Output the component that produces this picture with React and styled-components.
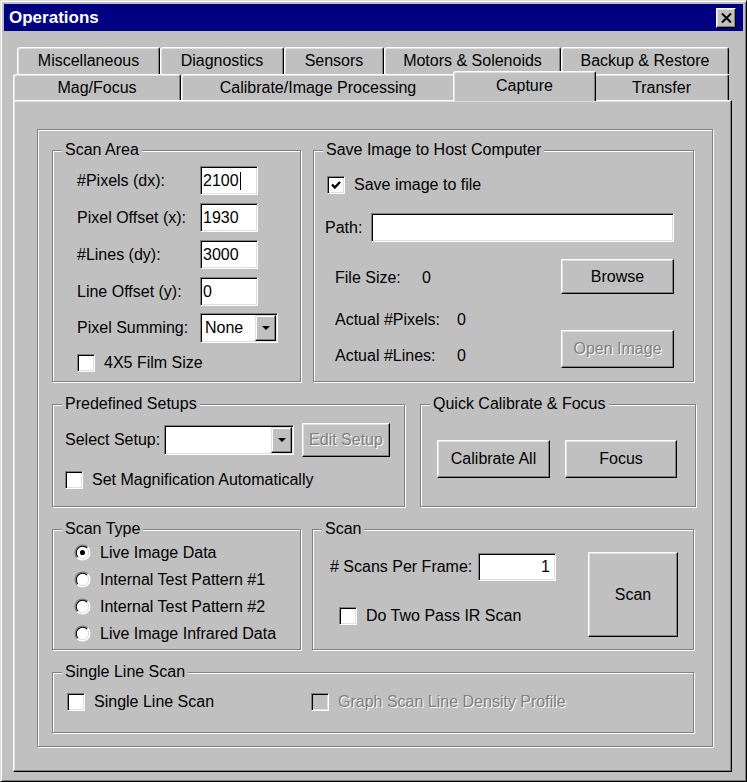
import React from 'react';
import styled, { createGlobalStyle, css } from 'styled-components';

const GlobalStyle = createGlobalStyle`
  html, body {
    margin: 0;
    padding: 0;
    background: #c0c0c0;
  }
  * {
    box-sizing: border-box;
  }
  body {
    font-family: "Liberation Sans", Arial, sans-serif;
    font-size: 16px;
    color: #000;
  }
`;

const Window = styled.div`
  width: 747px;
  height: 782px;
  background: #c0c0c0;
  border: 1px solid;
  border-color: #dfdfdf #000 #000 #dfdfdf;
  box-shadow: inset 1px 1px #fff, inset -1px -1px #808080;
  padding: 3px;
  display: flex;
  flex-direction: column;
`;

const TitleBar = styled.div`
  height: 27px;
  flex: none;
  background: #000080;
  color: #fff;
  display: flex;
  align-items: center;
  justify-content: space-between;
  padding: 0 7px 0 5px;
  font-weight: bold;
  font-size: 17px;
`;

const CloseBtn = styled.div`
  width: 20px;
  height: 20px;
  background: #c0c0c0;
  border: 1px solid;
  border-color: #fff #000 #000 #fff;
  box-shadow: inset -1px -1px #808080, inset 1px 1px #dfdfdf;
  display: flex;
  align-items: center;
  justify-content: center;
`;

const Body = styled.div`
  flex: 1;
  display: flex;
  flex-direction: column;
  padding: 16px 11px 6px 9px;
`;

const TabRow = styled.div`
  display: flex;
  flex: none;
  height: ${(p) => p.$h}px;
  padding-left: ${(p) => p.$indent || 0}px;
  position: relative;
  z-index: ${(p) => p.$z};
`;

const Tab = styled.div`
  width: ${(p) => p.$w}px;
  flex: none;
  height: 100%;
  background: #c0c0c0;
  border: 1px solid;
  border-bottom: none;
  border-color: #fff #000 transparent #fff;
  border-radius: 3px 3px 0 0;
  box-shadow: inset 1px 1px #dfdfdf, inset -1px 0 #808080;
  display: flex;
  align-items: center;
  justify-content: center;
  white-space: nowrap;
  ${(p) =>
    p.$active &&
    css`
      width: ${p.$w + 4}px;
      height: ${p.$h + 4}px;
      margin: -3px -2px -1px;
      position: relative;
      z-index: 3;
      padding-bottom: 2px;
    `}
`;

const Panel = styled.div`
  flex: 1;
  background: #c0c0c0;
  border: 1px solid;
  border-color: #fff #000 #000 #fff;
  box-shadow: inset -1px -1px #808080, inset 1px 1px #dfdfdf;
  padding: 28px 0 0 23px;
`;

const Frame = styled.div`
  width: 676px;
  height: 618px;
  border: 1px solid #808080;
  box-shadow: inset 1px 1px #fff, 1px 1px #fff;
  padding: 20px 0 0 14px;
  display: flex;
  flex-direction: column;
  gap: 22px;
`;

const GroupRow = styled.div`
  display: flex;
  gap: ${(p) => p.$gap}px;
`;

const Group = styled.div`
  position: relative;
  flex: none;
  width: ${(p) => p.$w}px;
  height: ${(p) => p.$h}px;
  border: 1px solid #808080;
  box-shadow: inset 1px 1px #fff, 1px 1px #fff;
  padding: ${(p) => p.$pad};
`;

const Caption = styled.span`
  position: absolute;
  top: -10px;
  left: 9px;
  padding: 0 3px;
  line-height: 18px;
  background: #c0c0c0;
  white-space: nowrap;
`;

const Label = styled.span`
  display: inline-block;
  width: ${(p) => (p.$w ? `${p.$w}px` : 'auto')};
  flex: none;
  line-height: 18px;
  white-space: nowrap;
  color: ${(p) => (p.$disabled ? '#808080' : '#000')};
  text-shadow: ${(p) => (p.$disabled ? '1px 1px 0 #fff' : 'none')};
`;

const Field = styled.div`
  width: ${(p) => (p.$w ? `${p.$w}px` : 'auto')};
  flex: ${(p) => (p.$w ? 'none' : '1')};
  height: ${(p) => p.$h || 29}px;
  background: #fff;
  border: 1px solid;
  border-color: #808080 #fff #fff #808080;
  box-shadow: inset 1px 1px #000, inset -1px -1px #dfdfdf;
  display: flex;
  align-items: center;
  justify-content: ${(p) => (p.$right ? 'flex-end' : 'flex-start')};
  padding: 0 5px 0 2px;
  white-space: nowrap;
`;

const Caret = styled.span`
  display: inline-block;
  width: 1px;
  height: 18px;
  background: #000;
  margin-left: 1px;
`;

const Combo = styled(Field)`
  padding: 1px;
  justify-content: space-between;
`;

const ComboText = styled.span`
  margin-left: 3px;
`;

const DropBtn = styled.div`
  width: 21px;
  height: 100%;
  background: #c0c0c0;
  border: 1px solid;
  border-color: #dfdfdf #000 #000 #dfdfdf;
  box-shadow: inset -1px -1px #808080, inset 1px 1px #fff;
  display: flex;
  align-items: center;
  justify-content: center;
`;

const Button = styled.div`
  width: ${(p) => p.$w}px;
  height: ${(p) => p.$h}px;
  flex: none;
  margin-left: ${(p) => p.$ml || 0}px;
  display: flex;
  align-items: center;
  justify-content: center;
  background: #c0c0c0;
  border: 1px solid;
  border-color: #fff #000 #000 #fff;
  box-shadow: inset -1px -1px #808080, inset 1px 1px #dfdfdf;
  white-space: nowrap;
  color: ${(p) => (p.$disabled ? '#808080' : '#000')};
  text-shadow: ${(p) => (p.$disabled ? '1px 1px 0 #fff' : 'none')};
`;

const CheckRow = styled.div`
  display: flex;
  align-items: center;
  gap: 9px;
  width: ${(p) => (p.$w ? `${p.$w}px` : 'auto')};
  flex: none;
  margin-top: ${(p) => p.$mt || 0}px;
  margin-left: ${(p) => p.$ml || 0}px;
`;

const Box = styled.span`
  width: 18px;
  height: 18px;
  flex: none;
  background: ${(p) => (p.$disabled ? '#c0c0c0' : '#fff')};
  border: 1px solid;
  border-color: #808080 #fff #fff #808080;
  box-shadow: inset 1px 1px #000, inset -1px -1px #dfdfdf;
  display: flex;
  align-items: center;
  justify-content: center;
`;

const FieldGrid = styled.div`
  display: grid;
  grid-template-columns: 123px auto;
  grid-auto-rows: 29px;
  row-gap: 8px;
  align-items: center;
`;

const Line = styled.div`
  display: flex;
  align-items: center;
  margin-top: ${(p) => p.$mt || 0}px;
  height: ${(p) => (p.$h ? `${p.$h}px` : 'auto')};
`;

const Lower = styled.div`
  display: flex;
  justify-content: space-between;
  margin-top: 17px;
`;

const InfoCol = styled.div`
  margin-left: 10px;
  padding-top: 10px;
`;

const InfoRow = styled.div`
  display: flex;
  line-height: 20px;
  margin-top: ${(p) => p.$mt || 0}px;
`;

const BtnCol = styled.div`
  display: flex;
  flex-direction: column;
  gap: 36px;
`;

const ButtonRow = styled.div`
  display: flex;
  gap: 15px;
`;

const RadioRow = styled.div`
  height: 27px;
  display: flex;
  align-items: center;
  gap: 9px;
`;

const ScanBody = styled.div`
  display: flex;
  align-items: flex-start;
`;

const ScanLeft = styled.div`
  flex: 1;
`;

const SingleBody = styled.div`
  display: flex;
`;

function Check({ checked }) {
  return (
    <svg width="12" height="12" viewBox="0 0 12 12">
      {checked && (
        <path d="M2 5.5 L4.8 8.5 L10 3" fill="none" stroke="#000" strokeWidth="2.4" />
      )}
    </svg>
  );
}

function CheckBox({ label, checked, disabled, ...rest }) {
  return (
    <CheckRow {...rest}>
      <Box $disabled={disabled}>
        <Check checked={checked} />
      </Box>
      <Label $disabled={disabled}>{label}</Label>
    </CheckRow>
  );
}

function RadioDot({ selected }) {
  return (
    <svg width="17" height="17" viewBox="0 0 16 16">
      <circle cx="8" cy="8" r="7" fill="#fff" />
      <path d="M3.05 12.95 A7 7 0 0 1 12.95 3.05" fill="none" stroke="#808080" strokeWidth="1.2" />
      <path d="M12.95 3.05 A7 7 0 0 1 3.05 12.95" fill="none" stroke="#fff" strokeWidth="1.2" />
      <path d="M3.76 12.24 A6 6 0 0 1 12.24 3.76" fill="none" stroke="#000" strokeWidth="1" />
      <path d="M12.24 3.76 A6 6 0 0 1 3.76 12.24" fill="none" stroke="#dfdfdf" strokeWidth="1" />
      {selected && <circle cx="8" cy="8" r="2.4" fill="#000" />}
    </svg>
  );
}

function Arrow() {
  return (
    <svg width="8" height="4" viewBox="0 0 8 4">
      <path d="M0 0 H8 L4 4 Z" fill="#000" />
    </svg>
  );
}

const row1 = [
  ['Miscellaneous', 143],
  ['Diagnostics', 124],
  ['Sensors', 100],
  ['Motors & Solenoids', 177],
  ['Backup & Restore', 168],
];

const row2 = [
  ['Mag/Focus', 168],
  ['Calibrate/Image Processing', 274],
  ['Capture', 139, true],
  ['Transfer', 135],
];

const scanTypes = [
  'Live Image Data',
  'Internal Test Pattern #1',
  'Internal Test Pattern #2',
  'Live Image Infrared Data',
];

export default function App() {
  return (
    <>
      <GlobalStyle />
      <Window>
        <TitleBar>
          <span>Operations</span>
          <CloseBtn>
            <svg width="11" height="10" viewBox="0 0 11 10">
              <path d="M1 0.5 L10 9.5 M10 0.5 L1 9.5" stroke="#000" strokeWidth="2" />
            </svg>
          </CloseBtn>
        </TitleBar>
        <Body>
          <TabRow $h={27} $indent={4} $z={1}>
            {row1.map(([name, w]) => (
              <Tab key={name} $w={w} $h={27}>
                {name}
              </Tab>
            ))}
          </TabRow>
          <TabRow $h={26} $z={2}>
            {row2.map(([name, w, active]) => (
              <Tab key={name} $w={w} $h={26} $active={active}>
                {name}
              </Tab>
            ))}
          </TabRow>
          <Panel>
            <Frame>
              <GroupRow $gap={12}>
                <Group $w={249} $h={232} $pad="15px 0 0 24px">
                  <Caption>Scan Area</Caption>
                  <FieldGrid>
                    <Label>#Pixels (dx):</Label>
                    <Field $w={58}>
                      2100
                      <Caret />
                    </Field>
                    <Label>Pixel Offset (x):</Label>
                    <Field $w={58}>1930</Field>
                    <Label>#Lines (dy):</Label>
                    <Field $w={58}>3000</Field>
                    <Label>Line Offset (y):</Label>
                    <Field $w={58}>0</Field>
                  </FieldGrid>
                  <Line $mt={7}>
                    <Label $w={123}>Pixel Summing:</Label>
                    <Combo $w={78} $h={30}>
                      <ComboText>None</ComboText>
                      <DropBtn>
                        <Arrow />
                      </DropBtn>
                    </Combo>
                  </Line>
                  <CheckBox $mt={11} label="4X5 Film Size" />
                </Group>
                <Group $w={381} $h={232} $pad="25px 19px 0 11px">
                  <Caption>Save Image to Host Computer</Caption>
                  <CheckBox $ml={2} label="Save image to file" checked />
                  <Line $mt={19}>
                    <Label $w={46}>Path:</Label>
                    <Field />
                  </Line>
                  <Lower>
                    <InfoCol>
                      <InfoRow>
                        <Label $w={87}>File Size:</Label>
                        <Label>0</Label>
                      </InfoRow>
                      <InfoRow $mt={24}>
                        <Label $w={122}>Actual #Pixels:</Label>
                        <Label>0</Label>
                      </InfoRow>
                      <InfoRow $mt={18}>
                        <Label $w={122}>Actual #Lines:</Label>
                        <Label>0</Label>
                      </InfoRow>
                    </InfoCol>
                    <BtnCol>
                      <Button $w={113} $h={35}>
                        Browse
                      </Button>
                      <Button $w={113} $h={38} $disabled>
                        Open Image
                      </Button>
                    </BtnCol>
                  </Lower>
                </Group>
              </GroupRow>

              <GroupRow $gap={15}>
                <Group $w={353} $h={103} $pad="18px 0 0 12px">
                  <Caption>Predefined Setups</Caption>
                  <Line $h={34}>
                    <Label $w={99}>Select Setup:</Label>
                    <Combo $w={130} $h={30}>
                      <ComboText />
                      <DropBtn>
                        <Arrow />
                      </DropBtn>
                    </Combo>
                    <Button $w={88} $h={34} $ml={8} $disabled>
                      Edit Setup
                    </Button>
                  </Line>
                  <CheckBox $mt={14} label="Set Magnification Automatically" />
                </Group>
                <Group $w={276} $h={103} $pad="35px 0 0 16px">
                  <Caption>Quick Calibrate &amp; Focus</Caption>
                  <ButtonRow>
                    <Button $w={113} $h={38}>
                      Calibrate All
                    </Button>
                    <Button $w={112} $h={38}>
                      Focus
                    </Button>
                  </ButtonRow>
                </Group>
              </GroupRow>

              <GroupRow $gap={11}>
                <Group $w={249} $h={121} $pad="9px 0 0 21px">
                  <Caption>Scan Type</Caption>
                  {scanTypes.map((t, i) => (
                    <RadioRow key={t}>
                      <RadioDot selected={i === 0} />
                      <Label>{t}</Label>
                    </RadioRow>
                  ))}
                </Group>
                <Group $w={382} $h={121} $pad="22px 15px 0 17px">
                  <Caption>Scan</Caption>
                  <ScanBody>
                    <ScanLeft>
                      <Line $mt={1}>
                        <Label $w={148}># Scans Per Frame:</Label>
                        <Field $w={78} $h={28} $right>
                          1
                        </Field>
                      </Line>
                      <CheckBox $mt={26} $ml={9} label="Do Two Pass IR Scan" />
                    </ScanLeft>
                    <Button $w={90} $h={85}>
                      Scan
                    </Button>
                  </ScanBody>
                </Group>
              </GroupRow>

              <GroupRow $gap={0}>
                <Group $w={642} $h={61} $pad="20px 0 0 14px">
                  <Caption>Single Line Scan</Caption>
                  <SingleBody>
                    <CheckBox $w={244} label="Single Line Scan" />
                    <CheckBox label="Graph Scan Line Density Profile" disabled />
                  </SingleBody>
                </Group>
              </GroupRow>
            </Frame>
          </Panel>
        </Body>
      </Window>
    </>
  );
}
